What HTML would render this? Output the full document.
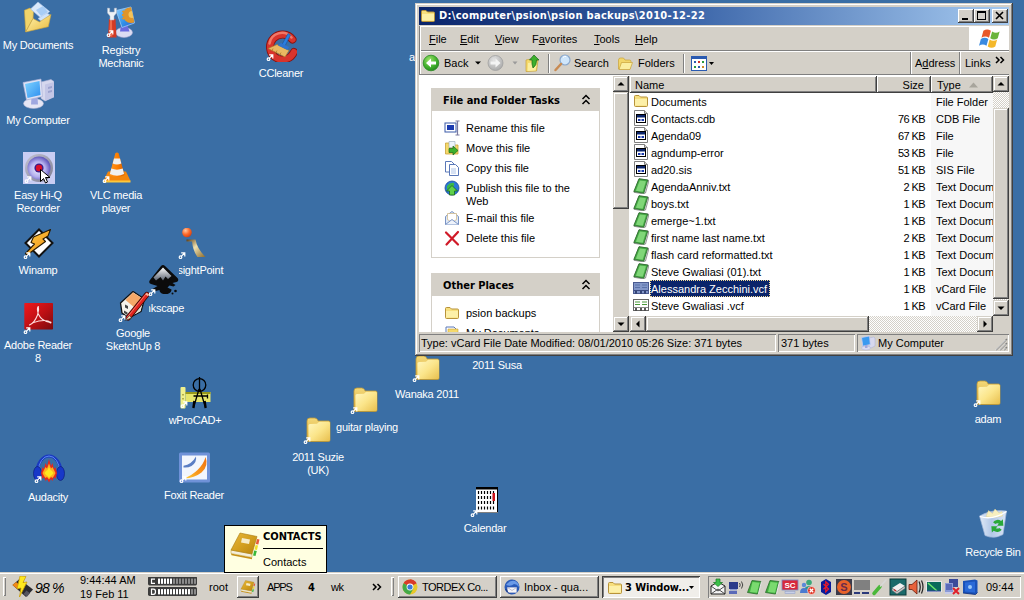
<!DOCTYPE html>
<html><head><meta charset="utf-8"><title>Desktop</title>
<style>
*{box-sizing:border-box}
html,body{margin:0;padding:0}
body{width:1024px;height:600px;overflow:hidden;background:#3a6ea5;position:relative;font:11px "Liberation Sans",sans-serif;color:#000}
.abs{position:absolute}
.b{font-family:"DejaVu Sans Condensed","Liberation Sans",sans-serif;font-weight:bold}
/* desktop icons */
.di{position:absolute;width:90px;text-align:center;color:#fff;line-height:13px;white-space:nowrap;letter-spacing:-.25px;margin-top:1px}
.di span{display:block}
.ic{position:absolute;width:32px;height:32px;background:#3a6ea5;z-index:1}
.ic svg{display:block}
/* window */
#win{z-index:2;position:absolute;left:415px;top:3px;width:598px;height:353px;background:#d4d0c8;
 box-shadow:inset -1px -1px 0 #404040,inset 1px 1px 0 #d4d0c8,inset -2px -2px 0 #808080,inset 2px 2px 0 #fff}
#title{position:absolute;left:4px;top:4px;width:590px;height:18px;background:linear-gradient(90deg,#0a246a 0%,#3a64a8 45%,#a6caf0 100%);color:#fff}
#title .t{position:absolute;left:20px;top:2px;font-size:11px;letter-spacing:.3px;white-space:nowrap}
.tb{position:absolute;top:2px;width:16px;height:14px;background:#d4d0c8;box-shadow:inset -1px -1px 0 #404040,inset 1px 1px 0 #fff,inset -2px -2px 0 #808080}
#menu{position:absolute;left:4px;top:23px;width:590px;height:24px}
#menu span{position:absolute;top:7px}
#menu u,#tool u{text-decoration:underline}
#tool{position:absolute;left:4px;top:48px;width:590px;height:24px}
#tool span{position:absolute;top:6px}
.vsep{position:absolute;width:2px;border-left:1px solid #808080;border-right:1px solid #fff}
.hsep{position:absolute;height:2px;border-top:1px solid #808080;border-bottom:1px solid #fff}
#left{position:absolute;left:4px;top:73px;width:194px;height:256px;background:#fff;overflow:hidden}
.ph{position:absolute;left:12px;width:169px;height:23px;background:#d4d0c8;font-size:11px}
.ph b{position:absolute;left:12px;top:6px;white-space:nowrap}
.pb{position:absolute;left:12px;width:169px;background:#fff;border:1px solid #d4d0c8;border-top:0}
.pb span{position:absolute;left:34px;white-space:nowrap;line-height:13px;margin-top:1px}
.sb{position:absolute;background:#eae8e3;background-image:conic-gradient(#fff 25%,#d4d0c8 0 50%,#fff 0 75%,#d4d0c8 0);background-size:2px 2px}
.btn{position:absolute;background:#d4d0c8;box-shadow:inset -1px -1px 0 #404040,inset 1px 1px 0 #d4d0c8,inset -2px -2px 0 #808080,inset 2px 2px 0 #fff}
#list{position:absolute;left:215px;top:73px;width:363px;height:240px;background:#fff;overflow:hidden}
.hd{position:absolute;top:0;height:17px;background:#d4d0c8;box-shadow:inset -1px -1px 0 #404040,inset 1px 1px 0 #fff,inset -2px -2px 0 #808080}
.hd span{position:absolute;top:3px}
.row{position:absolute;left:0;width:363px;height:17px;line-height:17px;white-space:nowrap}
.row .n{position:absolute;left:20px;top:0;height:17px;line-height:18.500px;padding:0 3px 0 1px}
.row .s{position:absolute;right:68px;top:.7px;letter-spacing:-.6px}
.row .t{position:absolute;left:306px;top:.7px}
.row svg{position:absolute;left:3px;top:0}
#status{position:absolute;left:4px;top:331px;width:590px;height:18px}
.sp{position:absolute;top:0;height:18px;box-shadow:inset 1px 1px 0 #808080,inset -1px -1px 0 #fff;line-height:18px;white-space:nowrap;overflow:hidden}
/* taskbar */
#task{z-index:3;position:absolute;left:0;top:572px;width:1024px;height:28px;background:#d4d0c8;box-shadow:inset 0 1px 0 #d4d0c8,inset 0 2px 0 #fff}
#task span{position:absolute;white-space:nowrap}
.tbtn{position:absolute;top:4px;height:22px;background:#d4d0c8;box-shadow:inset -1px -1px 0 #404040,inset 1px 1px 0 #fff,inset -2px -2px 0 #808080}
.tbtn span{top:5px}
</style></head><body>

<svg width="0" height="0" style="position:absolute"><defs>
<linearGradient id="gF" x1="0" y1="0" x2="1" y2="1"><stop offset="0" stop-color="#fff7c0"/><stop offset=".5" stop-color="#fbe58a"/><stop offset="1" stop-color="#e8bf4e"/></linearGradient>
<linearGradient id="gF2" x1="0" y1="0" x2="0" y2="1"><stop offset="0" stop-color="#f3d878"/><stop offset="1" stop-color="#d9ab3a"/></linearGradient>
<symbol id="fold" viewBox="0 0 32 32"><path d="M5 8q0-3 3-3h4.500q2 0 2.8 1.500l.9 1.500h10.300q1.5 0 1.5 1.500v17.500q0 1.5-1.5 1.500h-20q-1.5 0-1.5-1.500z" fill="url(#gF2)" stroke="#c29a35" stroke-width=".8"/><path d="M6.5 12.500q0-1.5 1.5-1.500l7-.2 2.2-2h9.300q1.5 0 1.5 1.500v16.200q0 1.5-1.5 1.500h-18.500q-1.5 0-1.5-1.500z" fill="url(#gF)"/></symbol>
<symbol id="sfold" viewBox="0 0 16 16"><path d="M1.5 3.500q0-1 1-1h3.500l1.5 1.500h6q1 0 1 1v7.500q0 1-1 1h-11q-1 0-1-1z" fill="#f7df7e" stroke="#b8933a" stroke-width="1"/><path d="M2 6h12v6.500h-12z" fill="#fdf0a8"/></symbol>
<symbol id="app" viewBox="0 0 16 16"><path d="M1.5 .5h10l3 3v12h-13z" fill="#fff" stroke="#808080" stroke-width="1"/><path d="M11.5 .5v3h3" fill="#d4d0c8" stroke="#808080" stroke-width="1"/><rect x="3.5" y="4.5" width="9" height="8" fill="#fff" stroke="#000" stroke-width="1"/><rect x="4" y="5" width="8" height="2.5" fill="#0a246a"/><rect x="5" y="9" width="2.5" height="2" fill="#1a3ab0"/><rect x="8.5" y="9" width="2.5" height="2" fill="#1a3ab0"/></symbol>
<symbol id="txt" viewBox="0 0 16 16"><path d="M6 .8l9.5 1.400v2l-3 10.8-1.5 1-10-1.700z" fill="#e4e4e4" stroke="#707070" stroke-width=".7"/><path d="M6 .8l8.8 1.2-4 13.2-10-1.700z" fill="#44a844" stroke="#2a6a2a" stroke-width=".8"/><path d="M6.8 2.400l6.2.9-3.3 10.5-6.8-1.100z" fill="#80d678"/></symbol>
<symbol id="vcf" viewBox="0 0 16 16"><rect x=".5" y="2.5" width="15" height="11" fill="#fff" stroke="#666" stroke-width="1"/><path d="M2 5h5M9 5h5M2 7.500h5M9 7.500h5" stroke="#4a9a3a" stroke-width="1.2"/><path d="M3 10.500v3M8 10.500v3M12 10.500v3" stroke="#222" stroke-width="1.5"/><path d="M1 10.500h14" stroke="#888" stroke-width="1"/></symbol>
<symbol id="vcfs" viewBox="0 0 16 16"><rect x=".5" y="2.5" width="15" height="11" fill="#8296c8" stroke="#4a5a90" stroke-width="1"/><path d="M2 5h5M9 5h5M2 7.500h5M9 7.500h5" stroke="#5a72a8" stroke-width="1.2"/><path d="M3 10.500v3M8 10.500v3M12 10.500v3" stroke="#1a2a5a" stroke-width="1.5"/><path d="M1 10.500h14" stroke="#3a4a80" stroke-width="1"/></symbol>
<symbol id="book" viewBox="0 0 32 32"><defs><linearGradient id="gbk" x1="0" y1="0" x2="1" y2="1"><stop offset="0" stop-color="#e8b83a"/><stop offset=".5" stop-color="#d4a020"/><stop offset="1" stop-color="#b88410"/></linearGradient></defs><path d="M2 23.500l21 4v1.800l-20.5-4z" fill="#c89018"/><path d="M2 20l21 4v3.500l-21-4z" fill="#f4eedc" stroke="#b8901a" stroke-width=".5"/><path d="M28 9l2.5.5-1.2 5-2.5-.5z" fill="#e85a3a"/><path d="M26.6 15l2.4.5-1 4.5-2.5-.5z" fill="#f0e02a"/><path d="M25.2 20.500l2.6.5-1.3 5-2.5-.5z" fill="#3ab83a"/><path d="M11 3l17 3.5-5 17.5-21-4z" fill="url(#gbk)" stroke="#a87a10" stroke-width=".6"/><path d="M13 8l8 1.6-1 4.4-8-1.600z" fill="#f6ecc8"/></symbol>
</defs></svg>
<div id="desk">
<div class="di" style="left:409px;top:50px;width:auto;text-align:left">a</div>
<div class="ic" id="i-mydocs" style="left:22px;top:1px"><svg width="32" height="32" viewBox="0 0 32 32" ><defs><linearGradient id="gd1" x1="0" y1="0" x2="1" y2="1"><stop offset="0" stop-color="#fff4b0"/><stop offset="1" stop-color="#e9b93c"/></linearGradient></defs>
<path d="M2.4 9.300l5.6-2.3 3.5 3.5-.5 7-7.3 13.500z" fill="#f1d46a" stroke="#c9a23a" stroke-width=".6"/>
<path d="M8.5 8l7.5-7 11.7 9.6-8.2 6.900z" fill="#dbe9fb" stroke="#a5bfe2" stroke-width=".6"/>
<path d="M14 9l7-4 5 6-7 4z" fill="#a8cdf5"/>
<path d="M16 17.500l9-5.5 3 2-8 7z" fill="#cfe3fa" stroke="#a5bfe2" stroke-width=".5"/>
<path d="M3.7 31l7.3-13.5 6.4 3.5 11.6-7.6-2.7 12.300z" fill="url(#gd1)" stroke="#c9a23a" stroke-width=".6"/></svg></div>
<div class="di" id="l-mydocs" style="left:-7px;top:38px"><span>My Documents</span></div>
<div class="ic" id="i-regmech" style="left:105px;top:6px"><svg width="32" height="32" viewBox="0 0 32 32" ><defs><linearGradient id="grm" x1="0" y1="0" x2="1" y2="1"><stop offset="0" stop-color="#8fd0ff"/><stop offset=".6" stop-color="#2f8fe8"/><stop offset="1" stop-color="#3a5ad0"/></linearGradient><clipPath id="crm"><path d="M11 4.500l15-3.5 3.5 16-12.5 4.500z"/></clipPath></defs>
<ellipse cx="19" cy="26.5" rx="8.5" ry="5" fill="#dcdcf2" stroke="#a8a8d0" stroke-width=".6"/><path d="M16 19l6-1 2.5 7.500h-9.500z" fill="#6a6ae0"/>
<path d="M11 4.500l15-3.5 3.5 16-12.5 4.500z" fill="url(#grm)" stroke="#9ccaf4" stroke-width=".8"/>
<g clip-path="url(#crm)"><circle cx="26" cy="9" r="8" fill="#e0952a"/><circle cx="27" cy="8.5" r="3.5" fill="#f4c35a"/><path d="M17.5 5l2 1.500M17 9h2.500M17.5 13l2-1.5" stroke="#e0952a" stroke-width="2"/></g>
<path d="M4 13h6.500l1 18.500h-8.500z" fill="#d23a25"/><path d="M5 14h2l.3 16.500h-3z" fill="#f06a4a"/>
<path d="M2.5 2v5l2.5 3v4h4v-4l2.5-3v-5l-2.2.3v3.700h-4.600v-3.700z" fill="#eef2f6" stroke="#a8b2c4" stroke-width=".5"/><g fill="none" stroke="#fff" stroke-width="1.2"><path d="M4.2 24.8h3.6v3.6M7.6 25l-3.3 3.3"/><circle cx="3.5" cy="29.2" r="1.3"/></g></svg></div>
<div class="di" id="l-regmech" style="left:76px;top:43px"><span>Registry</span><span>Mechanic</span></div>
<div class="ic" id="i-ccleaner" style="left:265px;top:30px"><svg width="32" height="32" viewBox="0 0 32 32" ><path d="M27.5 9.500a12.5 12.5 0 1 0 1.5 12.5" fill="none" stroke="#8a1410" stroke-width="8" stroke-linecap="round"/>
<path d="M27.5 9.500a12.5 12.5 0 1 0 1.5 12.5" fill="none" stroke="#d8342c" stroke-width="6.2" stroke-linecap="round"/>
<path d="M26.5 7.500a12.5 12.5 0 0 0-22 6" fill="none" stroke="#f07868" stroke-width="2.5" stroke-linecap="round"/>
<path d="M23 3.500l2.5 1.5-5.5 11-3-1.500z" fill="#2a7fe0" stroke="#1a4fa0" stroke-width=".6"/>
<path d="M12 14.500l12 6-4 6.5-17-8.500z" fill="#e9b862" stroke="#a87428" stroke-width=".6"/><path d="M13 15.500l3-2.5 8 4-1.5 3z" fill="#2f74d0"/>
<path d="M8 18.500l-1 2.500M12 20.500l-1.5 3M16 22.500l-1.5 3" stroke="#b07a2a" stroke-width=".8"/><g fill="none" stroke="#fff" stroke-width="1.2"><path d="M4.2 24.8h3.6v3.6M7.6 25l-3.3 3.3"/><circle cx="3.5" cy="29.2" r="1.3"/></g></svg></div>
<div class="di" id="l-ccleaner" style="left:236px;top:66px"><span>CCleaner</span></div>
<div class="ic" id="i-mycomp" style="left:22px;top:78px"><svg width="32" height="32" viewBox="0 0 32 32" ><defs><linearGradient id="gm1" x1="0" y1="0" x2="1" y2="1"><stop offset="0" stop-color="#7fd4ff"/><stop offset="1" stop-color="#2f8ff0"/></linearGradient></defs>
<path d="M19 4l10-2.5 3 2v15.500l-9 4-4-2.500z" fill="#d6d8ee" stroke="#a9aed3" stroke-width=".6"/><path d="M23 6.500l9-2.500v15l-9 4z" fill="#c3c6e6"/><path d="M26 9l4-1v2l-4 1zM26 13l4-1v2l-4 1z" fill="#9da3cf"/>
<ellipse cx="11.5" cy="25.5" rx="10" ry="5" fill="#e6e6f4" stroke="#aab0d0" stroke-width=".6"/><path d="M9.5 19h6l.5 7.500h-7z" fill="#9fa8e0"/>
<path d="M1 4.500l18-3.5 1.5 17.5-16 3.500z" fill="#dfe2f4" stroke="#aab0d6" stroke-width=".6"/><path d="M3 6l14.5-3 1 14-13 3z" fill="url(#gm1)"/></svg></div>
<div class="di" id="l-mycomp" style="left:-7px;top:113px"><span>My Computer</span></div>
<div class="ic" id="i-hiq" style="left:23px;top:152px"><svg width="32" height="32" viewBox="0 0 32 32" ><defs><radialGradient id="gh1" cx=".45" cy=".55" r=".6"><stop offset="0" stop-color="#f0f0ff"/><stop offset=".55" stop-color="#b4b0ee"/><stop offset="1" stop-color="#5044b0"/></radialGradient>
<linearGradient id="gh2" x1="0" y1="0" x2="1" y2="1"><stop offset="0" stop-color="#c4c4d4"/><stop offset="1" stop-color="#7c7c90"/></linearGradient></defs>
<rect width="32" height="32" fill="#c9cdf3"/><circle cx="16" cy="16" r="14" fill="url(#gh2)"/><circle cx="16" cy="16" r="11.5" fill="url(#gh1)"/>
<circle cx="16" cy="16" r="4.6" fill="#3a1a8a"/><circle cx="16" cy="16" r="3.2" fill="#d8102a"/><path d="M17.5 17.500v12l3-3 2 4.5 2-1-2-4.500h4.500z" fill="#fff" stroke="#000" stroke-width="1"/><g fill="none" stroke="#fff" stroke-width="1.2"><path d="M4.2 24.8h3.6v3.6M7.6 25l-3.3 3.3"/><circle cx="3.5" cy="29.2" r="1.3"/></g></svg></div>
<div class="di" id="l-hiq" style="left:-7px;top:188px"><span>Easy Hi-Q</span><span>Recorder</span></div>
<div class="ic" id="i-vlc" style="left:101px;top:152px"><svg width="32" height="32" viewBox="0 0 32 32" ><defs><linearGradient id="gv1" x1="0" y1="0" x2="1" y2="0"><stop offset="0" stop-color="#ff9a2a"/><stop offset=".5" stop-color="#ff8000"/><stop offset="1" stop-color="#d86000"/></linearGradient></defs>
<path d="M7 19.500h18l4.5 9.500h-27z" fill="#f4860c"/><path d="M2.5 28.500h27v2h-27z" fill="#ffc83a"/>
<path d="M14.3 1.500q1.7-2 3.4 0l5.8 21.500q-7.5 4-15 0z" fill="url(#gv1)"/>
<path d="M13 6.500h6l1.3 5q-4.3 1.8-8.6 0z" fill="#f0f0f0"/><path d="M10.3 16.500q5.7 2.3 11.4 0l1.4 5.500q-7.1 3.3-14.2 0z" fill="#f0f0f0"/><g fill="none" stroke="#fff" stroke-width="1.2"><path d="M4.2 24.8h3.6v3.6M7.6 25l-3.3 3.3"/><circle cx="3.5" cy="29.2" r="1.3"/></g></svg></div>
<div class="di" id="l-vlc" style="left:71px;top:188px"><span>VLC media</span><span>player</span></div>
<div class="ic" id="i-winamp" style="left:22px;top:228px"><svg width="32" height="32" viewBox="0 0 32 32" ><defs><linearGradient id="gwa" x1="0" y1="0" x2="1" y2="1"><stop offset="0" stop-color="#ffd24a"/><stop offset="1" stop-color="#f08a10"/></linearGradient></defs>
<path d="M17 1.500l13.5 13.5-13.5 13.5-13.5-13.500z" fill="#fff" stroke="#111" stroke-width="2"/>
<path d="M28.5 1.500l-2.5 6.5-5 3 2.5 2.5-18.5 13.5-1.5-1.5 9-9.5-3.5-1.5 2.5-5.500z" fill="url(#gwa)" stroke="#2a1a00" stroke-width="1.1" stroke-linejoin="round"/><g fill="none" stroke="#fff" stroke-width="1.2"><path d="M4.2 24.8h3.6v3.6M7.6 25l-3.3 3.3"/><circle cx="3.5" cy="29.2" r="1.3"/></g></svg></div>
<div class="di" id="l-winamp" style="left:-7px;top:263px"><span>Winamp</span></div>
<div class="ic" id="i-insight" style="left:177px;top:228px"><svg width="32" height="32" viewBox="0 0 32 32" ><defs><radialGradient id="gi1" cx=".35" cy=".3" r=".8"><stop offset="0" stop-color="#ffc9a0"/><stop offset=".5" stop-color="#ff6a2a"/><stop offset="1" stop-color="#c83a10"/></radialGradient>
<linearGradient id="gi2" x1="0" y1="0" x2="1" y2="1"><stop offset="0" stop-color="#5a3a10"/><stop offset=".45" stop-color="#efe0b0"/><stop offset="1" stop-color="#8a6a2a"/></linearGradient></defs>
<circle cx="10" cy="4.5" r="4.8" fill="url(#gi1)"/><path d="M9.5 11.500h9q1.5 9 10 17.500h-8q-4.5-6-5.5-15.500h-5.500z" fill="url(#gi2)"/><g fill="none" stroke="#fff" stroke-width="1.2"><path d="M4.2 24.8h3.6v3.6M7.6 25l-3.3 3.3"/><circle cx="3.5" cy="29.2" r="1.3"/></g></svg></div>
<div class="di" id="l-insight" style="left:151px;top:263px"><span>InsightPoint</span></div>
<div class="ic" id="i-inkscape" style="left:147px;top:265px"><svg width="32" height="32" viewBox="0 0 32 32" ><defs><linearGradient id="gik" x1="0" y1="0" x2="0" y2="1"><stop offset="0" stop-color="#fff"/><stop offset="1" stop-color="#5a6270"/></linearGradient></defs>
<path d="M14 1q2-2 4 0l12.5 12q2 3-1 4l-4 1 3 2-2 1.5-4-1-2 2 4 2q0 3-4 4.500h-4q-4-1-4-4l-4 1-3-2 5-3-6.5-2q-3-1-1-4z" fill="#0b0b0b"/>
<path d="M16 2.500l8.5 8.5-3.5 3-2.5-2.5-2.5 4-2.5-3.5-4.5 3.5-2.5-3z" fill="url(#gik)"/><circle cx="28.5" cy="26" r="1.3" fill="#0b0b0b"/><circle cx="25.5" cy="28.5" r="1" fill="#0b0b0b"/><g fill="none" stroke="#fff" stroke-width="1.2"><path d="M4.2 24.8h3.6v3.6M7.6 25l-3.3 3.3"/><circle cx="3.5" cy="29.2" r="1.3"/></g></svg></div>
<div class="di" id="l-inkscape" style="left:118px;top:301px"><span>Inkscape</span></div>
<div class="ic" id="i-adobe" style="left:22px;top:303px"><svg width="32" height="32" viewBox="0 0 32 32" ><defs><linearGradient id="ga1" x1="0" y1="0" x2="1" y2="1"><stop offset="0" stop-color="#f0181c"/><stop offset=".5" stop-color="#c01014"/><stop offset="1" stop-color="#7a0a0e"/></linearGradient></defs>
<rect x="2.3" y="0" width="28.7" height="26.5" rx=".8" fill="url(#ga1)"/>
<path d="M7.5 22q5-2 8-10 1.8-5 .8-8.5-1.8 1.5 0 7.5 3.5 7.5 12 8.5-2.5-3-11.5-1.5-6 1.2-9.3 4z" fill="none" stroke="#ffdcdc" stroke-width="1.1" stroke-linejoin="round"/><circle cx="28.5" cy="19.5" r="1" fill="#ffe8e8"/><g fill="none" stroke="#fff" stroke-width="1.2"><path d="M4.2 24.8h3.6v3.6M7.6 25l-3.3 3.3"/><circle cx="3.5" cy="29.2" r="1.3"/></g></svg></div>
<div class="di" id="l-adobe" style="left:-7px;top:338px"><span>Adobe Reader</span><span>8</span></div>
<div class="ic" id="i-sketchup" style="left:117px;top:291px"><svg width="32" height="32" viewBox="0 0 32 32" ><path d="M3.5 12l12.5-11.5 11.5 7.5-3.5 12.5-12 6.5-7-5z" fill="#f6f2ea" stroke="#111" stroke-width="1.3" stroke-linejoin="round"/>
<path d="M16 1.500l10.5 6.8-8.5 8.7-9.5-8z" fill="#f4a868"/><path d="M18 17l8.5-8.7-3 11.7-5 3z" fill="#e4dfd2"/>
<path d="M8 13.500l3 1.500v3l-3-1.500zM7 19.500l3.5 2v2.500l-3.5-2z" fill="#444"/>
<path d="M30 3.500l-19 23.5" stroke="#3a0a08" stroke-width="5.4" stroke-linecap="round"/><path d="M30 3.500l-19 23.5" stroke="#e0241e" stroke-width="3.6" stroke-linecap="round"/><path d="M29 3l-18.5 23" stroke="#f4766a" stroke-width="1"/>
<path d="M12.5 24.500l-4.5 5 6.5-2.500z" fill="#f8e8c0" stroke="#222" stroke-width=".6"/><path d="M29 2.500l2.5 2" stroke="#f0b8a0" stroke-width="2"/><g fill="none" stroke="#fff" stroke-width="1.2"><path d="M4.2 24.8h3.6v3.6M7.6 25l-3.3 3.3"/><circle cx="3.5" cy="29.2" r="1.3"/></g></svg></div>
<div class="di" id="l-sketchup" style="left:88px;top:326px"><span>Google</span><span>SketchUp 8</span></div>
<div class="ic" id="i-wprocad" style="left:179px;top:377px"><svg width="32" height="32" viewBox="0 0 32 32" ><rect x="1.5" y="10" width="5" height="21.5" rx="1" fill="#f0f08c"/><rect x="6.5" y="15" width="25" height="10" fill="#e6e66c"/><rect x="6.5" y="15" width="25" height="2" fill="#98981a"/>
<path d="M4 17v1.500M4 21v1.5" stroke="#8a8620" stroke-width="1.2"/>
<g fill="none" stroke="#000" stroke-width="1.3"><circle cx="20.5" cy="8" r="6.3"/><path d="M20.5 0v14M20 12l-5.5 19M21 12l5.5 19M14.5 19h14M28.5 17.500v4"/></g><path d="M15.3 24l-1 7M25.7 24l1 7" stroke="#000" stroke-width="2.2"/><g fill="none" stroke="#fff" stroke-width="1.2"><path d="M4.2 24.8h3.6v3.6M7.6 25l-3.3 3.3"/><circle cx="3.5" cy="29.2" r="1.3"/></g></svg></div>
<div class="di" id="l-wprocad" style="left:150px;top:413px"><span>wProCAD+</span></div>
<div class="ic" id="i-audacity" style="left:33px;top:452px"><svg width="32" height="32" viewBox="0 0 32 32" ><path d="M4 21a12 17 0 0 1 24 0" fill="none" stroke="#1a3ac0" stroke-width="3.2"/><path d="M5.5 19a10.5 15 0 0 1 21 0" fill="none" stroke="#5a86f0" stroke-width="1"/>
<ellipse cx="4.5" cy="21.5" rx="4" ry="7" fill="#1838c8" stroke="#0a1a70" stroke-width=".6"/><ellipse cx="27.5" cy="21.5" rx="4" ry="7" fill="#1838c8" stroke="#0a1a70" stroke-width=".6"/>
<path d="M8 21l1.5-6 1.5 2 1.5-6 1.5 3 2-7 2 7 1.5-3 1.5 6 1.5-2 1.5 6-1.5 6-1.5-2-1.5 4-1.5-2-2 3.5-2-3.5-1.5 2-1.5-4-1.5 2z" fill="#e8281c"/>
<path d="M9.5 21l1.5-3 1.5-3 1.5 1.5 2-5 2 5 1.5-1.5 1.5 3 1.5 3-1.5 3-1.5 2-1.5-1-2 2.5-2-2.5-1.5 1-1.5-2z" fill="#ffb01e"/>
<path d="M11.5 21l1.5-2 1.5-1 1.5-3 1.5 3 1.5 1 1.5 2-1.5 2-1.5 1-1.5 2-1.5-2-1.5-1z" fill="#ffe81e"/><g fill="none" stroke="#fff" stroke-width="1.2"><path d="M4.2 24.8h3.6v3.6M7.6 25l-3.3 3.3"/><circle cx="3.5" cy="29.2" r="1.3"/></g></svg></div>
<div class="di" id="l-audacity" style="left:3px;top:490px"><span>Audacity</span></div>
<div class="ic" id="i-foxit" style="left:178px;top:452px"><svg width="32" height="32" viewBox="0 0 32 32" ><defs><linearGradient id="gfx" x1="1" y1="0" x2="0" y2="1"><stop offset="0" stop-color="#f07010"/><stop offset=".6" stop-color="#f89a1e"/><stop offset="1" stop-color="#ffd23a"/></linearGradient></defs>
<rect x="1" y=".5" width="31" height="30" rx="1.5" fill="#6f92d8"/><rect x="4" y="3.5" width="25" height="24" fill="#f2f6fd"/>
<path d="M27.5 5q3.5 9-4 15.5-7 5.5-17.5 6 8.5-3.5 13.5-8.5 6.5-6.5 8-13z" fill="url(#gfx)"/><path d="M18 4.500q1 6-4.5 9.5-3.5 2-8 1.500v-1.800q8-1 12.5-9.200z" fill="#5a7ec4"/><g fill="none" stroke="#fff" stroke-width="1.2"><path d="M4.2 24.8h3.6v3.6M7.6 25l-3.3 3.3"/><circle cx="3.5" cy="29.2" r="1.3"/></g></svg></div>
<div class="di" id="l-foxit" style="left:149px;top:488px"><span>Foxit Reader</span></div>
<div class="ic" id="i-susa" style="left:481px;top:323px"><svg width="32" height="32" viewBox="0 0 32 32" ><use href="#fold" width="32" height="32"/><g fill="none" stroke="#fff" stroke-width="1.2"><path d="M4.2 24.8h3.6v3.6M7.6 25l-3.3 3.3"/><circle cx="3.5" cy="29.2" r="1.3"/></g></svg></div>
<div class="di" id="l-susa" style="left:452px;top:358px"><span>2011 Susa</span></div>
<div class="ic" id="i-wanaka" style="left:411px;top:351px"><svg width="32" height="32" viewBox="0 0 32 32" ><use href="#fold" width="32" height="32"/><g fill="none" stroke="#fff" stroke-width="1.2"><path d="M4.2 24.8h3.6v3.6M7.6 25l-3.3 3.3"/><circle cx="3.5" cy="29.2" r="1.3"/></g></svg></div>
<div class="di" id="l-wanaka" style="left:382px;top:387px"><span>Wanaka 2011</span></div>
<div class="ic" id="i-guitar" style="left:349px;top:383px"><svg width="32" height="32" viewBox="0 0 32 32" ><use href="#fold" width="32" height="32"/><g fill="none" stroke="#fff" stroke-width="1.2"><path d="M4.2 24.8h3.6v3.6M7.6 25l-3.3 3.3"/><circle cx="3.5" cy="29.2" r="1.3"/></g></svg></div>
<div class="di" id="l-guitar" style="left:322px;top:420px"><span>guitar playing</span></div>
<div class="ic" id="i-suzie" style="left:302px;top:413px"><svg width="32" height="32" viewBox="0 0 32 32" ><use href="#fold" width="32" height="32"/><g fill="none" stroke="#fff" stroke-width="1.2"><path d="M4.2 24.8h3.6v3.6M7.6 25l-3.3 3.3"/><circle cx="3.5" cy="29.2" r="1.3"/></g></svg></div>
<div class="di" id="l-suzie" style="left:273px;top:450px"><span>2011 Suzie</span><span>(UK)</span></div>
<div class="ic" id="i-calendar" style="left:469px;top:486px"><svg width="32" height="32" viewBox="0 0 32 32" ><rect x="7" y="1" width="22" height="25.5" fill="#fff"/><rect x="7" y="1" width="22" height="2.5" fill="#000"/><rect x="28" y="1" width="1" height="25.5" fill="#000"/><rect x="7" y="26" width="22" height="1" fill="#808080"/>
<g stroke="#000" stroke-width="1.2"><path d="M9.5 5v3"/><path d="M9.5 10v3"/><path d="M9.5 15v3"/><path d="M9.5 20.5v3"/><path d="M12.5 5v3"/><path d="M12.5 10v3"/><path d="M12.5 15v3"/><path d="M12.5 20.5v3"/><path d="M15.5 5v3"/><path d="M15.5 10v3"/><path d="M15.5 15v3"/><path d="M15.5 20.5v3"/><path d="M18.5 5v3"/><path d="M18.5 10v3"/><path d="M18.5 15v3"/><path d="M18.5 20.5v3"/><path d="M21.5 5v3"/><path d="M21.5 10v3"/><path d="M21.5 15v3"/><path d="M21.5 20.5v3"/><path d="M24.5 5v3"/><path d="M24.5 10v3"/><path d="M24.5 15v3"/><path d="M24.5 20.5v3"/></g><rect x="23.5" y="7" width="2.5" height="8" fill="#d0141c"/><g fill="none" stroke="#fff" stroke-width="1.2"><path d="M4.2 24.8h3.6v3.6M7.6 25l-3.3 3.3"/><circle cx="3.5" cy="29.2" r="1.3"/></g></svg></div>
<div class="di" id="l-calendar" style="left:440px;top:521px"><span>Calendar</span></div>
<div class="ic" id="i-adam" style="left:972px;top:376px"><svg width="32" height="32" viewBox="0 0 32 32" ><use href="#fold" width="32" height="32"/><g fill="none" stroke="#fff" stroke-width="1.2"><path d="M4.2 24.8h3.6v3.6M7.6 25l-3.3 3.3"/><circle cx="3.5" cy="29.2" r="1.3"/></g></svg></div>
<div class="di" id="l-adam" style="left:943px;top:412px"><span>adam</span></div>
<div class="ic" id="i-recycle" style="left:977px;top:507px"><svg width="32" height="32" viewBox="0 0 32 32" ><defs><linearGradient id="gr1" x1="0" y1="0" x2="1" y2="0"><stop offset="0" stop-color="#eef4fc"/><stop offset=".45" stop-color="#bccfee"/><stop offset="1" stop-color="#e8f0fc"/></linearGradient></defs>
<path d="M2.5 9q13-7 27-5l-3.5 23.500q-9 5-18 1z" fill="url(#gr1)" stroke="#a9bde0" stroke-width=".7" opacity=".93"/>
<path d="M9 9.500l2.5-6 4 3 2.5-4.5 4 4 3-1.5 .5 4.500q-8 2.5-16.5 .5z" fill="#f7efc0" stroke="#e0d08a" stroke-width=".4"/><path d="M3 9.500q13 4 26.5-5" fill="none" stroke="#fff" stroke-width="1.3"/>
<g transform="translate(-3.5,-1.5) scale(1.150)"><path d="M17 14.500a5 5 0 0 1 7-1l1.5-1.5.5 5.500h-5.500l1.5-1.800a3 3 0 0 0-3 .3z" fill="#28a838"/><path d="M24.5 21a5 5 0 0 1-7 1l-1.5 1.5-.5-5.500h5.500l-1.5 1.800a3 3 0 0 0 3-.3z" fill="#28a838"/></g></svg></div>
<div class="di" id="l-recycle" style="left:948px;top:545px"><span>Recycle Bin</span></div>
</div>

<!-- EXPLORER WINDOW -->
<div id="win">
 <div id="title"><svg class="abs" style="left:1px;top:1px" width="16" height="16"><use href="#sfold" width="16" height="16"/></svg><div class="t b">D:\computer\psion\psion backups\2010-12-22</div>
  <div class="tb" style="left:539px"><svg width="16" height="14"><rect x="4" y="9" width="6" height="2" fill="#000"/></svg></div><div class="tb" style="left:555px"><svg width="16" height="14"><rect x="3.5" y="2.5" width="8" height="8" fill="none" stroke="#000"/><rect x="3" y="2" width="9" height="2" fill="#000"/></svg></div><div class="tb" style="left:573px"><svg width="16" height="14"><path d="M4 3l7 7M11 3l-7 7" stroke="#000" stroke-width="1.6"/></svg></div>
 </div>
 <div id="menu">
  <span style="left:10px"><u>F</u>ile</span><span style="left:41px"><u>E</u>dit</span><span style="left:76px"><u>V</u>iew</span><span style="left:113px">F<u>a</u>vorites</span><span style="left:175px"><u>T</u>ools</span><span style="left:216px"><u>H</u>elp</span>
  <div class="abs" style="left:550px;top:1px;width:40px;height:23px;background:#fff"><svg width="40" height="23" viewBox="2.5 2 32 18.4"><path d="M14 5q3-2 6 0l-1.5 5.500q-3-2-6 0z" fill="#e8582a"/><path d="M21 5.500q3 2 6 0l-1.5 5.500q-3 2-6 0z" fill="#6ab43a"/><path d="M12 11.500q3-2 6 0l-1.5 5.500q-3-2-6 0z" fill="#3a8ae0"/><path d="M19 12q3 2 6 0l-1.5 5.500q-3 2-6 0z" fill="#f4b82a"/></svg></div>
  <div class="hsep" style="left:0;top:-1px;width:590px;border-top-color:#d4d0c8"></div>
 </div>
 <div id="tool">
  <div class="hsep" style="left:0;top:-1px;width:590px"></div>
  <svg class="abs" style="left:0;top:0" width="300" height="24">
   <defs><radialGradient id="gb" cx=".4" cy=".3" r=".8"><stop offset="0" stop-color="#9be36a"/><stop offset=".6" stop-color="#3fae2a"/><stop offset="1" stop-color="#1f7a1a"/></radialGradient>
   <radialGradient id="gg" cx=".4" cy=".3" r=".8"><stop offset="0" stop-color="#e4e4e4"/><stop offset="1" stop-color="#a4a4a4"/></radialGradient></defs>
   <circle cx="12" cy="12" r="7.8" fill="url(#gb)" stroke="#2a8a22" stroke-width=".8"/><path d="M7 12l5-4.500v3h5v3h-5v3z" fill="#fff"/>
   <path d="M56 10.500h6l-3 3z" fill="#000"/>
   <circle cx="76.5" cy="12" r="7.5" fill="url(#gg)" stroke="#a0a0a0" stroke-width=".8"/><path d="M81.5 12l-5-4.500v3h-5v3h5v3z" fill="#f4f4f4"/>
   <path d="M93.5 10.500h5l-2.5 3z" fill="#9a9a9a"/>
   <path d="M107 9l5-1 2 1.500h5l-1.5 10.5-10.5.5z" fill="#f5d96a" stroke="#c9a23a" stroke-width=".7"/><path d="M109 12l9-1-1.5 8.5-8 .5z" fill="#fbeea0"/>
   <path d="M115 4l5 5h-2.500q.5 5-3.5 8-1.5-4-1-8h-2.500z" fill="#3db02e" stroke="#1a6a18" stroke-width=".7"/>
   <circle cx="146" cy="9" r="5" fill="#cfe6fb" stroke="#8aa8cc" stroke-width="1.2"/><path d="M142 13l-5.5 6" stroke="#c88a52" stroke-width="2.5" stroke-linecap="round"/><path d="M144 6.500a3 3 0 0 1 3-1" stroke="#fff" stroke-width="1" fill="none"/>
   <path d="M199.5 9q0-2 2-2h3l1.5 2h4.500q1.5 0 1.5 1.500l-1 7.500h-11.500z" fill="#f2d66a" stroke="#c9a23a" stroke-width=".7"/><path d="M202.5 11.500h11l-2.5 7h-11z" fill="#fbeea0" stroke="#c9a23a" stroke-width=".7"/>
   <rect x="272.5" y="5.5" width="15" height="14" fill="#fff" stroke="#2a5ab0" stroke-width="1"/><rect x="272" y="5" width="16" height="3" fill="#2a5ab0"/>
   <rect x="275" y="10" width="2" height="2" fill="#2a5ab0"/><rect x="279" y="10" width="2" height="2" fill="#d0302a"/><rect x="283" y="10" width="2" height="2" fill="#2a9a3a"/>
   <rect x="275" y="15" width="2" height="2" fill="#2a9a3a"/><rect x="279" y="15" width="2" height="2" fill="#2a5ab0"/><rect x="283" y="15" width="2" height="2" fill="#d08a2a"/>
   <path d="M290 11h5l-2.5 3z" fill="#000"/>
  </svg>
  <span style="left:25px">Back</span>
  <span style="left:155px">Search</span>
  <span style="left:219px">Folders</span>
  <div class="vsep" style="left:129px;top:3px;height:19px"></div>
  <div class="vsep" style="left:264px;top:3px;height:19px"></div>
  <div class="vsep" style="left:491px;top:1px;height:22px"></div>
  <div class="vsep" style="left:540px;top:1px;height:22px"></div>
  <span style="left:496px">A<u>d</u>dress</span>
  <span style="left:546px">Links</span>
  <svg class="abs" style="left:576px;top:5px" width="10" height="8"><path d="M1 1l3 3-3 3M5.5 1l3 3-3 3" fill="none" stroke="#000" stroke-width="1.5"/></svg>
  <div class="hsep" style="left:0;top:23px;width:590px;border-bottom-color:#fff"></div>
 </div>
 <div class="abs" style="left:4px;top:23px;width:1px;height:48px;background:#808080"></div><div class="abs" style="left:5px;top:24px;width:1px;height:47px;background:#fff"></div>
 <div id="left">
  <div class="ph" style="top:12px"><b class="b">File and Folder Tasks</b><svg class="abs" style="left:150px;top:6px" width="10" height="12"><path d="M1.5 5l3.5-3.5 3.5 3.500M1.5 10l3.5-3.5 3.5 3.5" fill="none" stroke="#000" stroke-width="1.5"/></svg></div>
  <div class="pb" style="top:35px;height:147px">
   <svg class="abs" style="left:12px;top:0" width="18" height="147">
    <g transform="translate(0,9)"><rect x="1" y="3" width="11" height="9" fill="#fff" stroke="#3a5aa8" stroke-width="1"/><rect x="3" y="5" width="7" height="5" fill="#1a3ab0"/><path d="M13.5 1v14M11.5 1h4M11.5 15h4" stroke="#7a7aa0" stroke-width="1.2"/></g>
    <g transform="translate(0,29)"><path d="M1.5 3h5l1.5 2h6v9h-12.500z" fill="#f5d96a" stroke="#c9a23a" stroke-width=".8"/><path d="M5 1.500h6v6h-6z" fill="#eef4fc" stroke="#9ab" stroke-width=".6"/><path d="M5 8.500h4v-2.500l5 4.5-5 4.500v-2.500h-4z" fill="#3db02e" stroke="#1a6a18" stroke-width=".7"/></g>
    <g transform="translate(0,49)"><path d="M1.5 1.500h6l2.5 2.500v8h-8.500z" fill="#fff" stroke="#5a78b8" stroke-width="1"/><path d="M5.5 4.500h6l3 3v8h-9z" fill="#fff" stroke="#5a78b8" stroke-width="1"/><path d="M7 9h5M7 11h5M7 13h5" stroke="#9ab4e0" stroke-width=".8"/></g>
    <g transform="translate(0,69)"><circle cx="8" cy="8" r="7" fill="#2a78d8" stroke="#1a4a98" stroke-width=".8"/><path d="M3 6q3-4 7-3 1 3-2 4-3 0-5 3z" fill="#3cb84a"/><path d="M8 5.500l5.5 5.500h-3v4h-5v-4h-3z" fill="#5fd04a" stroke="#1a6a18" stroke-width=".8"/></g>
    <g transform="translate(0,99)"><path d="M1.5 6.500l6.5-5 6.5 5v8h-13z" fill="#dfe8f6" stroke="#7a94c4" stroke-width="1"/><path d="M3.5 3.500h9v6l-4.5 3-4.5-3z" fill="#fff" stroke="#c8a86a" stroke-width=".6"/><path d="M1.5 14.500l6.5-5 6.5 5" fill="#eef3fb" stroke="#7a94c4" stroke-width="1"/></g>
    <g transform="translate(0,119)"><path d="M2 2.500l12 12M14 2l-11.5 12.5" stroke="#d01a28" stroke-width="2.2" stroke-linecap="round"/></g>
   </svg>
   <span style="top:10px">Rename this file</span>
   <span style="top:30px">Move this file</span>
   <span style="top:50px">Copy this file</span>
   <span style="top:70px">Publish this file to the<br>Web</span>
   <span style="top:100px">E-mail this file</span>
   <span style="top:120px">Delete this file</span>
  </div>
  <div class="ph" style="top:197px"><b class="b">Other Places</b><svg class="abs" style="left:150px;top:6px" width="10" height="12"><path d="M1.5 5l3.5-3.5 3.5 3.500M1.5 10l3.5-3.5 3.5 3.5" fill="none" stroke="#000" stroke-width="1.5"/></svg></div>
  <div class="pb" style="top:220px;height:60px">
   <svg class="abs" style="left:12px;top:0" width="18" height="60"><use href="#sfold" x="0" y="9" width="16" height="16"/>
    <g transform="translate(0,29)"><path d="M2 2h8l3 3v10h-11z" fill="#fff" stroke="#5a78b8"/><path d="M4 4h10v4h-10z" fill="#f5d96a" stroke="#c9a23a" stroke-width=".6"/></g></svg>
   <span style="top:10px">psion backups</span>
   <span style="top:30px">My Documents</span>
  </div>
 </div>
 <div class="abs" style="left:198px;top:73px;width:16px;height:256px;background:#d6d2ca"></div><div class="abs" style="left:214px;top:90px;width:1px;height:223px;background:#fff"></div>
 <div class="btn" style="left:198px;top:73px;width:16px;height:16px"><svg width="16" height="16" style="display:block"><path d="M4.5 9.500h7l-3.5-3.500z" fill="#000"/></svg></div>
 <div class="btn" style="left:198px;top:89px;width:16px;height:117px"></div>
 <div class="btn" style="left:198px;top:313px;width:16px;height:16px"><svg width="16" height="16" style="display:block"><path d="M4.5 6.500h7l-3.5 3.500z" fill="#000"/></svg></div>
 <div id="list">
 <div class="abs" style="left:301px;top:17px;width:62px;height:223px;background:#f7f7f7"></div>
 <div class="hd" style="left:0;width:247px"><span style="left:5px">Name</span></div>
 <div class="hd" style="left:247px;width:54px"><span style="right:7px">Size</span></div>
 <div class="hd" style="left:301px;width:62px"><span style="left:6px">Type</span><svg class="abs" style="left:38px;top:5px" width="10" height="8"><path d="M0 6.500h9l-4.5-5z" fill="#a8a59c"/></svg></div>
 <div class="row" style="top:17px"><svg width="16" height="16"><use href="#sfold" width="16" height="16"/></svg><span class="n">Documents</span><span class="s"></span><span class="t">File Folder</span></div>
 <div class="row" style="top:34px"><svg width="16" height="16"><use href="#app" width="16" height="16"/></svg><span class="n">Contacts.cdb</span><span class="s">76 KB</span><span class="t">CDB File</span></div>
 <div class="row" style="top:51px"><svg width="16" height="16"><use href="#app" width="16" height="16"/></svg><span class="n">Agenda09</span><span class="s">67 KB</span><span class="t">File</span></div>
 <div class="row" style="top:68px"><svg width="16" height="16"><use href="#app" width="16" height="16"/></svg><span class="n">agndump-error</span><span class="s">53 KB</span><span class="t">File</span></div>
 <div class="row" style="top:85px"><svg width="16" height="16"><use href="#app" width="16" height="16"/></svg><span class="n">ad20.sis</span><span class="s">51 KB</span><span class="t">SIS File</span></div>
 <div class="row" style="top:102px"><svg width="16" height="16"><use href="#txt" width="16" height="16"/></svg><span class="n">AgendaAnniv.txt</span><span class="s">2 KB</span><span class="t">Text Docum</span></div>
 <div class="row" style="top:119px"><svg width="16" height="16"><use href="#txt" width="16" height="16"/></svg><span class="n">boys.txt</span><span class="s">1 KB</span><span class="t">Text Docum</span></div>
 <div class="row" style="top:136px"><svg width="16" height="16"><use href="#txt" width="16" height="16"/></svg><span class="n">emerge~1.txt</span><span class="s">1 KB</span><span class="t">Text Docum</span></div>
 <div class="row" style="top:153px"><svg width="16" height="16"><use href="#txt" width="16" height="16"/></svg><span class="n">first name last name.txt</span><span class="s">2 KB</span><span class="t">Text Docum</span></div>
 <div class="row" style="top:170px"><svg width="16" height="16"><use href="#txt" width="16" height="16"/></svg><span class="n">flash card reformatted.txt</span><span class="s">1 KB</span><span class="t">Text Docum</span></div>
 <div class="row" style="top:187px"><svg width="16" height="16"><use href="#txt" width="16" height="16"/></svg><span class="n">Steve Gwaliasi (01).txt</span><span class="s">1 KB</span><span class="t">Text Docum</span></div>
 <div class="row" style="top:204px"><svg width="16" height="16"><use href="#vcfs" width="16" height="16"/></svg><span class="n" style="background:#0a246a;color:#fff;outline:1px dotted #f5db95;outline-offset:-1px">Alessandra Zecchini.vcf</span><span class="s">1 KB</span><span class="t">vCard File</span></div>
 <div class="row" style="top:221px"><svg width="16" height="16"><use href="#vcf" width="16" height="16"/></svg><span class="n">Steve Gwaliasi .vcf</span><span class="s">1 KB</span><span class="t">vCard File</span></div>
</div>
 <div class="sb" style="left:578px;top:73px;width:16px;height:240px"></div>
 <div class="btn" style="left:578px;top:73px;width:16px;height:16px"><svg width="16" height="16" style="display:block"><path d="M4.5 9.500h7l-3.5-3.500z" fill="#000"/></svg></div>
 <div class="btn" style="left:578px;top:105px;width:16px;height:191px"></div>
 <div class="btn" style="left:578px;top:297px;width:16px;height:16px"><svg width="16" height="16" style="display:block"><path d="M4.5 6.500h7l-3.5 3.500z" fill="#000"/></svg></div>
 <div class="sb" style="left:215px;top:313px;width:363px;height:16px"></div>
 <div class="btn" style="left:215px;top:313px;width:16px;height:16px"><svg width="16" height="16" style="display:block"><path d="M9.5 4.500v7l-3.5-3.500z" fill="#000"/></svg></div>
 <div class="btn" style="left:231px;top:313px;width:223px;height:16px"></div>
 <div class="btn" style="left:562px;top:313px;width:16px;height:16px"><svg width="16" height="16" style="display:block"><path d="M6.5 4.500v7l3.5-3.500z" fill="#000"/></svg></div>
 <div class="abs" style="left:578px;top:313px;width:16px;height:16px;background:#d4d0c8"></div>
 <div id="status">
  <div class="sp" style="left:0;width:357px;padding-left:2px">Type: vCard File Date Modified: 08/01/2010 05:26 Size: 371 bytes</div>
  <div class="sp" style="left:359px;width:77px;padding-left:3px">371 bytes</div>
  <div class="sp" style="left:438px;width:152px;padding-left:21px">My Computer<svg class="abs" style="left:3px;top:1px" width="16" height="16"><path d="M9 3l4.5-1 1.5 1v8l-4 2-2-1z" fill="#d6d8ee" stroke="#a9aed3" stroke-width=".5"/><ellipse cx="6" cy="13" rx="4.5" ry="2" fill="#dcdcf0" stroke="#aab0d0" stroke-width=".5"/><path d="M1.5 2.500l8-1.5.8 8.5-7.5 1.700z" fill="#3a9af0" stroke="#c8ccf0" stroke-width=".8"/><rect x="5" y="10" width="2.5" height="3" fill="#9fa8e0"/></svg><svg class="abs" style="right:1px;bottom:1px" width="13" height="13"><path d="M12 1l-11 11M12 5l-7 7M12 9l-3 3" stroke="#808080" stroke-width="1.4"/><path d="M12 2l-10 10M12 6l-6 6M12 10l-2 2" stroke="#fff" stroke-width=".8" transform="translate(-1.5,0)"/></svg></div>
 </div>
</div>

<!-- CONTACTS TIP -->
<div id="tip" class="abs" style="z-index:4;left:224px;top:525px;width:103px;height:48px;background:#ffffe1;border:1px solid #000">
 <svg class="abs" style="left:4px;top:4px" width="32" height="32"><use href="#book" width="32" height="32"/></svg>
 <span class="abs b" style="left:38px;top:4px;font-size:11px">CONTACTS</span>
 <div class="abs" style="left:38px;top:22px;width:60px;height:1px;background:#000"></div>
 <span class="abs" style="left:38px;top:30px">Contacts</span>
</div>

<!-- TASKBAR -->
<div id="task">
 <div class="abs" style="left:3px;top:5px;width:3px;height:19px;box-shadow:inset 1px 1px 0 #fff,inset -1px -1px 0 #808080"></div>
 <svg class="abs" style="left:11px;top:4px" width="24" height="24"><path d="M1.5 9l7-6 13.5 10.5-7 7.500z" fill="#2a2a30"/><path d="M1.5 9l3.5-3 4.5 3.5-3.5 3.200z" fill="#f08a1a"/><path d="M12.5 18l3-3.5 3.5 2.7-3 3.500z" fill="#55555f"/><path d="M9 0l6 .5-3 6 4-.5-7.5 15 1.5-9-4 1z" fill="#ffe81e" stroke="#c89a00" stroke-width=".7"/></svg>
 <span style="left:35px;top:8px;font:italic 14px 'Liberation Sans',sans-serif;letter-spacing:-.8px">98 %</span>
 <span style="left:80px;top:2px">9:44:44 AM</span>
 <span style="left:80px;top:16px">19 Feb 11</span>
 <svg class="abs" style="left:148px;top:5px" width="50" height="20" viewBox="0 0.5 50 19" preserveAspectRatio="none"><rect x="0" y="0" width="49" height="8.5" rx="1.5" fill="#3c3c3c"/><rect x="0" y="10" width="49" height="8.5" rx="1.5" fill="#3c3c3c"/><rect x="10" y="2" width="2" height="5" fill="#fff"/><rect x="13" y="2" width="2" height="5" fill="#fff"/><rect x="16" y="2" width="2" height="5" fill="#fff"/><rect x="19" y="2" width="2" height="5" fill="#fff"/><rect x="22" y="2" width="2" height="5" fill="#fff"/><rect x="25" y="2" width="2" height="5" fill="#8a8a8a"/><rect x="28" y="2" width="2" height="5" fill="#8a8a8a"/><rect x="31" y="2" width="2" height="5" fill="#8a8a8a"/><rect x="34" y="2" width="2" height="5" fill="#8a8a8a"/><rect x="37" y="2" width="2" height="5" fill="#8a8a8a"/><rect x="40" y="2" width="2" height="5" fill="#8a8a8a"/><rect x="43" y="2" width="2" height="5" fill="#8a8a8a"/><rect x="46" y="2" width="2" height="5" fill="#8a8a8a"/><rect x="10" y="12" width="2" height="5" fill="#fff"/><rect x="13" y="12" width="2" height="5" fill="#fff"/><rect x="16" y="12" width="2" height="5" fill="#fff"/><rect x="19" y="12" width="2" height="5" fill="#fff"/><rect x="22" y="12" width="2" height="5" fill="#fff"/><rect x="25" y="12" width="2" height="5" fill="#fff"/><rect x="28" y="12" width="2" height="5" fill="#fff"/><rect x="31" y="12" width="2" height="5" fill="#fff"/><rect x="34" y="12" width="2" height="5" fill="#fff"/><rect x="37" y="12" width="2" height="5" fill="#fff"/><rect x="40" y="12" width="2" height="5" fill="#fff"/><rect x="43" y="12" width="2" height="5" fill="#8a8a8a"/><rect x="46" y="12" width="2" height="5" fill="#8a8a8a"/><path d="M7 2.500h-3.500v4h3.5" fill="none" stroke="#fff" stroke-width="1.2"/><path d="M3.5 12v5h2q2 0 2-2.500t-2-2.500z" fill="none" stroke="#fff" stroke-width="1.2"/></svg>
 <span style="left:209px;top:9px">root</span>
 <div class="tbtn" style="left:237px;top:4px;width:22px;height:22px"><svg class="abs" style="left:3px;top:3px" width="16" height="16"><use href="#book" width="16" height="16"/></svg></div>
 <span style="left:267px;top:9px;letter-spacing:-1.200px">APPS</span>
 <span class="b" style="left:308px;top:9px;font-size:11px">4</span>
 <span style="left:331px;top:9px;letter-spacing:-.4px">wk</span>
 <svg class="abs" style="left:372px;top:11px" width="10" height="8"><path d="M1 1l3 3-3 3M5.5 1l3 3-3 3" fill="none" stroke="#000" stroke-width="1.5"/></svg>
 <div class="abs" style="left:391px;top:5px;width:3px;height:19px;box-shadow:inset 1px 1px 0 #fff,inset -1px -1px 0 #808080"></div>
 <div class="tbtn" style="left:398px;width:99px"><svg class="abs" style="left:4px;top:3px" width="16" height="16"><circle cx="8" cy="8" r="7.5" fill="#e8c82a"/><path d="M8 8l-6.5-3.700a7.5 7.5 0 0 1 13 0z" fill="#d83a2a"/><path d="M8 8l-6.5-3.700a7.5 7.5 0 0 0 6.5 11.200l3.5-6z" fill="#3aa84a" opacity=".95"/><path d="M8 .5a7.5 7.5 0 0 1 6.5 3.800h-6.500z" fill="#d83a2a"/><circle cx="8" cy="8" r="3.4" fill="#fff"/><circle cx="8" cy="8" r="2.6" fill="#3a7ad8"/></svg><span style="left:24px;letter-spacing:-.5px">TORDEX Co...</span></div>
 <div class="tbtn" style="left:500px;width:99px"><svg class="abs" style="left:4px;top:3px" width="16" height="16"><circle cx="8" cy="8" r="7.5" fill="#2a5ab8"/><path d="M2 6q3-5 9-4 4 2 4 6-2-3-5-3-3 3-8 1z" fill="#6a9ae8"/><path d="M3.5 8.500h9v5h-9z" fill="#f4f4f8" stroke="#c8c8d8" stroke-width=".5"/><path d="M3.5 8.500l4.5 3 4.5-3" fill="none" stroke="#a8a8c0" stroke-width=".7"/><path d="M1 10q2 5 7 5.5-4-1-5-5z" fill="#1a3a88"/></svg><span style="left:24px">Inbox - qua...</span></div>
 <div class="tbtn" style="left:602px;width:98px;background:#f0eeea;box-shadow:inset 1px 1px 0 #404040,inset -1px -1px 0 #fff,inset 2px 2px 0 #808080"><svg class="abs" style="left:5px;top:4px" width="16" height="16"><use href="#sfold" width="16" height="16"/></svg><span class="b" style="left:23px;top:5px;font-size:11px;letter-spacing:-.1px">3 Window...</span><svg class="abs" style="left:87px;top:10px" width="6" height="4"><path d="M0 0h5l-2.5 3z"/></svg></div>
 <div class="abs" style="left:708px;top:4px;width:313px;height:22px;box-shadow:inset 1px 1px 0 #808080,inset -1px -1px 0 #fff"></div>
 <svg class="abs" style="left:708px;top:4px" width="276" height="22" id="tray"><g transform="translate(2,3)"><path d="M1 7l7-4 7 4v8h-14z" fill="#f4f4f4" stroke="#222" stroke-width="1"/><path d="M1 15l7-5 7 5M1 7l7 5 7-5" fill="none" stroke="#222" stroke-width=".8"/><path d="M6 0h4v3.500h2.500l-4.5 4-4.5-4h2.500z" fill="#3cc04a" stroke="#1a7a22" stroke-width=".7"/></g><g transform="translate(20,3)"><rect x="1" y="3" width="9" height="7" fill="#2a3a8a"/><rect x="2" y="10" width="7" height="1.5" fill="#8a9ad0"/><rect x="1" y="12" width="8" height="3" fill="#5a6ab8"/><path d="M11.5 4q1.5 2 0 4M13.5 2.500q2.5 3.5 0 7" fill="none" stroke="#444" stroke-width="1"/></g><g transform="translate(38,3)"><path d="M6 1.500l9 1-3 12-1 .5-9.5-1.500z" fill="#3fae3f" stroke="#2a6a2a" stroke-width=".8"/><path d="M6.5 3l7 .8-2.5 10-7-.9z" fill="#7ada6f"/><path d="M12 14.500l3-12 .8.5-2.8 12z" fill="#e8e8e8"/></g><g transform="translate(56,3)"><path d="M6 1.500l9 1-3 12-1 .5-9.5-1.500z" fill="#3fae3f" stroke="#2a6a2a" stroke-width=".8"/><path d="M6.5 3l7 .8-2.5 10-7-.9z" fill="#7ada6f"/><path d="M12 14.500l3-12 .8.5-2.8 12z" fill="#e8e8e8"/></g><g transform="translate(74,3)"><rect x="0" y="1" width="16" height="10" fill="#d8283a" stroke="#7a8ac8" stroke-width=".8"/><text x="8" y="9" font-family="Liberation Sans,sans-serif" font-weight="bold" font-size="8" fill="#fff" text-anchor="middle">SC</text><rect x="3" y="12.5" width="10" height="2" fill="#c8d0e8" stroke="#8a9ac8" stroke-width=".5"/></g><g transform="translate(92,3)"><circle cx="9" cy="3.5" r="2.8" fill="#3aa878"/><path d="M4 13q0-6 5-6t5 6z" fill="#2a9a8a"/><circle cx="4" cy="6" r="2.2" fill="#5a8ad8"/><path d="M0 14q0-5 4-5t4 5z" fill="#4a7ad0"/><circle cx="11.5" cy="11.5" r="4" fill="#e03a2a" stroke="#fff" stroke-width=".6"/><path d="M9.8 9.800l3.4 3.400M13.2 9.800l-3.4 3.4" stroke="#fff" stroke-width="1.3"/></g><g transform="translate(110,3)"><path d="M3 3l5-3 5 3v10l-5 3-5-3z" fill="#0a1a9a"/><path d="M5.5 5l5 5-2.7 2.700v-10l2.7 2.6-5 5" fill="none" stroke="#e81a2a" stroke-width="1.3"/></g><g transform="translate(128,3)"><rect width="16" height="16" fill="#3a3a4a"/><circle cx="8" cy="8" r="7" fill="#e8622a"/><text x="8" y="12" font-family="Liberation Sans,sans-serif" font-weight="bold" font-size="11" fill="#6a2a4a" text-anchor="middle">S</text></g><g transform="translate(146,3)"><rect x="0" y="1" width="16" height="10" fill="#808080"/><rect x="0" y="13" width="6" height="2" fill="#2a3a7a"/><rect x="8" y="13" width="7" height="2" fill="#2a3a7a"/></g><g transform="translate(164,3)"><path d="M2 14.500l6-7" stroke="#4ab83a" stroke-width="3.5" stroke-linecap="round"/><path d="M8.5 7l5.5-6" stroke="#d8d8d8" stroke-width="1.6" stroke-linecap="round"/></g><g transform="translate(182,3)"><rect width="16" height="16" fill="#1a6a6a" stroke="#0a3a3a" stroke-width="1"/><path d="M2 9l8-5 5 3-8 5.500z" fill="#f0f0f0"/><path d="M2 9v2.500l5 3.5 8-5.500v-2.500l-8 5.500z" fill="#c8c8c8" stroke="#555" stroke-width=".5"/><path d="M4 10.500l2 1.4" stroke="#d02a2a" stroke-width="1.2"/></g><g transform="translate(200,3)"><path d="M1 5.500h3l5-4.500v14l-5-4.500h-3z" fill="#e8623a" stroke="#6a1a0a" stroke-width=".8"/><path d="M11 2.500q2.5 5.5 0 11M13.5 1.500q3 6.5 0 13" fill="none" stroke="#222" stroke-width="1.2"/></g><g transform="translate(218,3)"><rect x=".5" y="2.5" width="15" height="10" fill="#0a6a5a" stroke="#e8e8e8" stroke-width="1"/><path d="M2 4l9 8" stroke="#6ae86a" stroke-width="1.5"/><path d="M1 12h14" stroke="#2a3a9a" stroke-width="1"/></g><g transform="translate(236,3)"><rect x="5" y="0" width="9" height="8" fill="#3a4a9a"/><rect x="1" y="4" width="8" height="9" fill="#8a9ad8"/><rect x="2" y="5" width="6" height="6" fill="#5a6ab8"/><rect x="1" y="13" width="8" height="2" fill="#c8cce8"/><path d="M9 9l6 6M15 9l-6 6" stroke="#e0202a" stroke-width="2"/></g><g transform="translate(254,3)"><path d="M1 2l12-1.5 2.5 1v12l-2 2-12.5-1.500z" fill="#1a52b8"/><path d="M3 3.500l10-1v11l-10-1z" fill="#2a6ad8"/><circle cx="8" cy="8" r="2" fill="#9ac8f8"/><path d="M1 14l12.5 1.5 2-2" fill="none" stroke="#0a2a78" stroke-width=".8"/></g></svg>
 <span style="left:986px;top:9px">09:44</span>
</div>

</body></html>
